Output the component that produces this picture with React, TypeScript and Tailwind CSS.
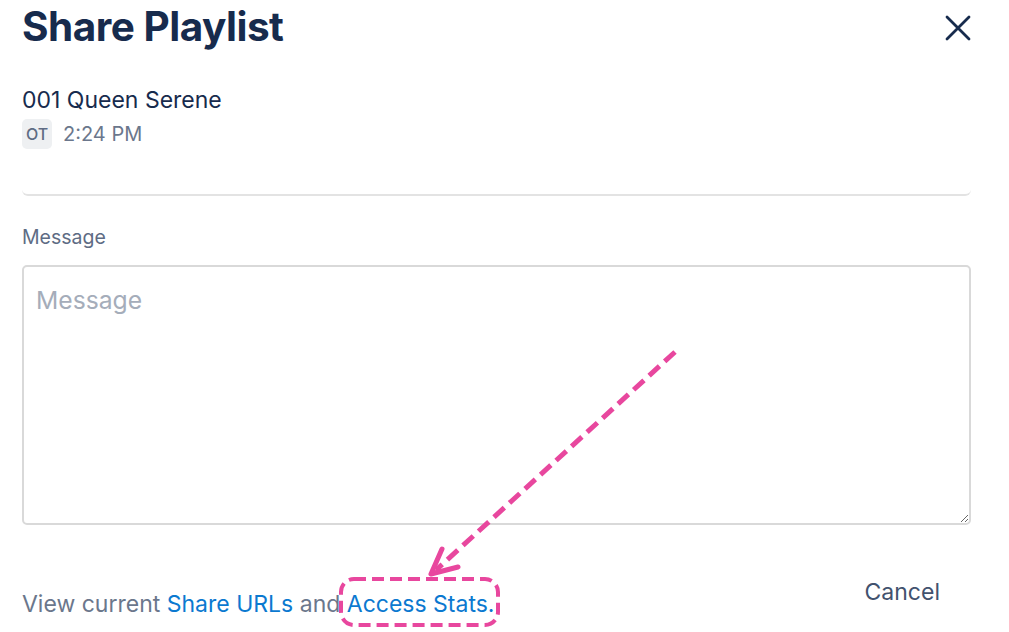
import React from "react";

export default function App() {
  return (
    <div
      className="relative w-[1009px] h-[632px] overflow-hidden bg-white"
      style={{ fontFamily: "Inter, 'Noto Sans', sans-serif" }}
    >
      <div className="flex flex-col pl-[22px] pr-[38px]">
        <div className="flex items-start justify-between h-[56px]">
          <h1 className="text-[40.5px] leading-[54px] font-bold text-[#172b4d] tracking-[-0.5px]">
            Share Playlist
          </h1>
          <button className="mt-[14px] mr-[-1px] text-[#172b4d]">
            <svg width="28" height="28" viewBox="0 0 28 28" fill="none" stroke="currentColor" strokeWidth="2.8" strokeLinecap="round">
              <path d="M3 3 L25 25 M25 3 L3 25" />
            </svg>
          </button>
        </div>
        <div className="pt-[30px] h-[140px] rounded-b-[6px] border-b-2 border-[#e3e3e3]">
          <div className="text-[23px] leading-[28px] text-[#172b4d]">001 Queen Serene</div>
          <div className="mt-[5px] flex items-center gap-[11px]">
            <div className="w-[30px] h-[30px] rounded-[5px] bg-[#eef0f2] flex items-center justify-center text-[16px] font-medium text-[#5e6c84]">
              OT
            </div>
            <span className="text-[20px] text-[#6b778c]">2:24 PM</span>
          </div>
        </div>
        <label className="mt-[29px] text-[19.5px] leading-[24px] text-[#5e6c84]">Message</label>
        <textarea
          placeholder="Message"
          className="mt-[16px] h-[260px] w-full rounded-[5px] border-2 border-[#d9d9d9] px-[12px] pt-[18px] text-[24.7px] leading-[30px] text-[#172b4d] placeholder:text-[#a5adba] outline-none resize-y"
        />
        <div className="mt-[53px] flex items-start justify-between">
          <p className="mt-[12px] text-[23px] leading-[28px] text-[#6b778c]">
            View current <span className="text-[#0b79d0]">Share URLs</span> and{" "}
            <span className="text-[#0b79d0]">Access Stats.</span>
          </p>
          <button className="mr-[31px] text-[23px] leading-[28px] text-[#42526e]">Cancel</button>
        </div>
      </div>
      <svg className="absolute left-0 top-0 pointer-events-none" width="1009" height="632">
        <g stroke="#e8479e" fill="none" strokeWidth="5">
          <path d="M675 352 L436 570" strokeDasharray="14 7" />
          <path d="M442 549 L431 574 L458 567" strokeLinecap="round" strokeLinejoin="round" />
          <rect x="341" y="579" width="157" height="46" rx="13" strokeWidth="4" strokeDasharray="12 6" />
        </g>
      </svg>
    </div>
  );
}
